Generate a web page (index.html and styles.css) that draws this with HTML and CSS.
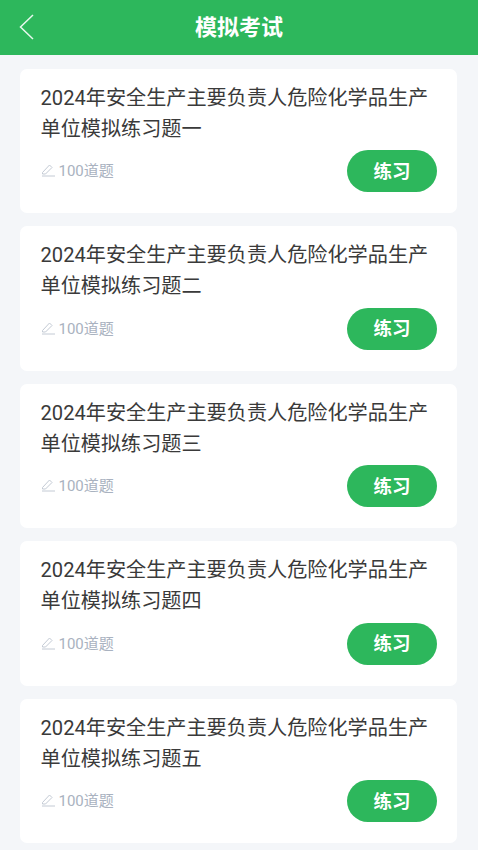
FILE: index.html
```html
<!DOCTYPE html>
<html lang="zh-CN">
<head>
<meta charset="UTF-8" />
<meta name="viewport" content="width=device-width, initial-scale=1" />
<title>模拟考试</title>
<link rel="stylesheet" href="styles.css">
</head>
<body>

<header class="topbar">
  <svg class="back" width="18" height="28" viewBox="0 0 18 28"><path d="M15 2 L2.5 14 L15 26" /></svg>
  <h1>模拟考试</h1>
</header>

<main class="list">
  <section class="card">
    <h2>2024年安全生产主要负责人危险化学品生产单位模拟练习题一</h2>
    <div class="row">
      <span class="count"><svg class="pen" width="15" height="15" viewBox="0 0 15 15"><path d="M1.5 10.5 L8.5 3 L11 5.5 L4.5 12 H1.5 Z M1 14 H14" /></svg>100道题</span>
      <span class="btn">练习</span>
    </div>
  </section>
  <section class="card">
    <h2>2024年安全生产主要负责人危险化学品生产单位模拟练习题二</h2>
    <div class="row">
      <span class="count"><svg class="pen" width="15" height="15" viewBox="0 0 15 15"><path d="M1.5 10.5 L8.5 3 L11 5.5 L4.5 12 H1.5 Z M1 14 H14" /></svg>100道题</span>
      <span class="btn">练习</span>
    </div>
  </section>
  <section class="card">
    <h2>2024年安全生产主要负责人危险化学品生产单位模拟练习题三</h2>
    <div class="row">
      <span class="count"><svg class="pen" width="15" height="15" viewBox="0 0 15 15"><path d="M1.5 10.5 L8.5 3 L11 5.5 L4.5 12 H1.5 Z M1 14 H14" /></svg>100道题</span>
      <span class="btn">练习</span>
    </div>
  </section>
  <section class="card">
    <h2>2024年安全生产主要负责人危险化学品生产单位模拟练习题四</h2>
    <div class="row">
      <span class="count"><svg class="pen" width="15" height="15" viewBox="0 0 15 15"><path d="M1.5 10.5 L8.5 3 L11 5.5 L4.5 12 H1.5 Z M1 14 H14" /></svg>100道题</span>
      <span class="btn">练习</span>
    </div>
  </section>
  <section class="card">
    <h2>2024年安全生产主要负责人危险化学品生产单位模拟练习题五</h2>
    <div class="row">
      <span class="count"><svg class="pen" width="15" height="15" viewBox="0 0 15 15"><path d="M1.5 10.5 L8.5 3 L11 5.5 L4.5 12 H1.5 Z M1 14 H14" /></svg>100道题</span>
      <span class="btn">练习</span>
    </div>
  </section>
</main>

</body>
</html>
```

FILE: styles.css
```css
html, body {
  height: 100%;
}
body {
  margin: 0;
  height: 850px;
  overflow: hidden;
  background-color: #f4f6f9;
  font-family: Roboto, "Noto Sans CJK SC", sans-serif;
}

/* --- Barra superiore --- */
.topbar {
  position: relative;
  height: 55px;
  background-color: #2db75c;
  display: flex;
  align-items: center;
  justify-content: center;
}
.topbar h1 {
  margin: 0 0 5px;
  font-size: 22px;
  font-weight: 700;
  color: #fff;
}
.back {
  position: absolute;
  left: 18px;
  top: 13px;
}
.back path {
  fill: none;
  stroke: #e8f8ee;
  stroke-width: 1.5;
}

/* --- Schede --- */
.list {
  display: flex;
  flex-direction: column;
  gap: 13px;
  padding: 13.5px 21px 0 20px;
}
.card {
  height: 144.5px;
  box-sizing: border-box;
  padding: 14px 20px 0 20.5px;
  background-color: #fff;
  border-radius: 7px;
}
.card h2 {
  margin: 0;
  font-size: 20.15px;
  font-weight: 400;
  line-height: 31px;
  color: #3a3a3a;
}
.row {
  display: flex;
  justify-content: space-between;
  align-items: center;
  margin-top: 5.6px;
}
.count {
  display: flex;
  align-items: center;
  gap: 3px;
  font-size: 15px;
  color: #a9b2c0;
  margin-top: -3px;
}
.pen path {
  fill: none;
  stroke: #c3cad4;
  stroke-width: 1;
}
.btn {
  width: 90px;
  height: 42px;
  border-radius: 21px;
  background-color: #2db75c;
  color: #fff;
  font-size: 18.5px;
  font-weight: 700;
  display: flex;
  align-items: center;
  justify-content: center;
  padding-bottom: 3px;
  box-sizing: border-box;
}
```
